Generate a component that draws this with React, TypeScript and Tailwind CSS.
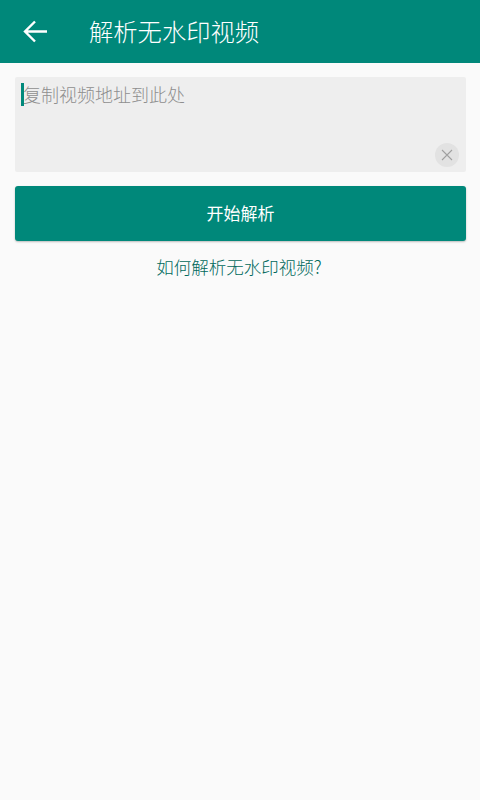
export default function App() {
  const font = { fontFamily: '"Noto Sans CJK SC", Roboto, sans-serif' };
  return (
    <div style={font} className="w-[480px] h-[800px] bg-[#fafafa] flex flex-col overflow-hidden">
      <header className="h-[63px] bg-[#00887a] flex items-center shrink-0">
        <svg width="24" height="24" viewBox="0 0 24 24" className="ml-[23px]" fill="none" stroke="#fff" strokeWidth="2.4">
          <path d="M24 11.5H2M12 1.5 2 11.5l10 10" />
        </svg>
        <h1 className="ml-[42px] mb-[1px] text-[24.3px] leading-[32px] font-light text-white">解析无水印视频</h1>
      </header>
      <div className="flex flex-col pl-[15px] pr-[14px] pt-[14px]">
        <div className="relative h-[95px] bg-[#eeeeee] rounded-[2px]">
          <span className="absolute left-[6px] top-[6px] w-[3px] h-[23px] bg-[#00897b]" />
          <div className="pl-[8px] pt-[4px] text-[18px] leading-[26px] font-light text-[#8f8f8f]">复制视频地址到此处</div>
          <div className="absolute left-[420px] top-[66px] w-[24px] h-[24px] rounded-full bg-[#e2e2e2] flex items-center justify-center">
            <svg width="12" height="12" viewBox="0 0 12 12" fill="none" stroke="#a0a0a0" strokeWidth="1.1">
              <path d="M1 1l10 10M11 1 1 11" />
            </svg>
          </div>
        </div>
        <button className="mt-[14px] h-[55px] w-full bg-[#00887a] rounded-[3px] text-white text-[17px] leading-[50px] font-normal pb-[1px] shadow-[0_1px_2px_rgba(0,0,0,0.25)]">开始解析</button>
        <div className="mt-[12px] pr-[3px] text-center text-[17.5px] leading-[28px] font-light text-[#00695c]">如何解析无水印视频?</div>
      </div>
    </div>
  );
}
